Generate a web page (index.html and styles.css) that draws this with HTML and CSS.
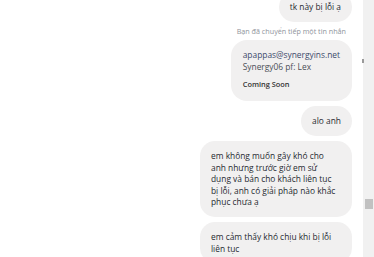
FILE: index.html
```html
<!DOCTYPE html>
<html lang="vi">
  <head>
    <meta charset="UTF-8" />
    <meta name="viewport" content="width=device-width, initial-scale=1.0" />
    <title>Tin nhắn</title>
    <link rel="stylesheet" href="styles.css">
  </head>
  <body>
    <div class="window">
      <div class="thread">
        <div class="bubble first">tk này bị lỗi ạ</div>
        <div class="fwdLabel">Bạn đã chuyển tiếp một tin nhắn</div>
        <div class="bubble fwd">
          <div class="email">apappas@synergyins.net</div>
          <div class="sub">Synergy06 pf: Lex</div>
          <div class="soon">Coming Soon</div>
        </div>
        <div class="bubble">alo anh</div>
        <div class="bubble wide">em không muốn gây khó cho anh nhưng trước giờ em sử dụng và bán cho khách liên tục bị lỗi, anh có giải pháp nào khắc phục chưa ạ</div>
        <div class="bubble wide">em cảm thấy khó chịu khi bị lỗi liên tục</div>
      </div>
      <div class="scrollbar">
        <span class="tick"></span>
        <div class="thumb"></div>
      </div>
    </div>
  </body>
</html>
```

FILE: styles.css
```css
body {
  margin: 0;
  background: #fff;
  font-family: "Open Sans", "Noto Sans", sans-serif;
  overflow: hidden;
}
.window {
  display: flex;
  height: 257px;
  width: 374px;
}
.thread {
  flex: 1;
  display: flex;
  flex-direction: column;
  align-items: flex-end;
  padding-right: 11px;
  margin-top: -8px;
}
.bubble {
  background: #f1f0f0;
  color: #262a31;
  font-size: 8.4px;
  line-height: 11.5px;
  padding: 9px 11px;
  border-radius: 15px;
  margin-bottom: 5.5px;
  box-sizing: border-box;
}
.bubble.first {
  margin-bottom: 4px;
}
.bubble.wide {
  width: 152px;
  padding-right: 15px;
}
.fwdLabel {
  font-size: 7.2px;
  line-height: 10px;
  color: #90949c;
  margin-right: 6px;
  margin-bottom: 4px;
}
.bubble.fwd {
  line-height: 12px;
  padding: 9px 12px 11px;
  border-radius: 16px;
}
.email {
  color: #3b4a6b;
}
.sub {
  color: #4b4f56;
}
.soon {
  font-weight: 600;
  font-size: 7.4px;
  color: #333;
  margin-top: 5px;
}
.scrollbar {
  position: relative;
  width: 11px;
  background: #f1f1f1;
}
.thumb {
  margin: 199px 1px 0 2px;
  height: 10px;
  background: #c1c1c1;
}
.tick {
  position: absolute;
  left: -1px;
  top: 59px;
  width: 2px;
  height: 4px;
  background: #9a9a9a;
}
```
